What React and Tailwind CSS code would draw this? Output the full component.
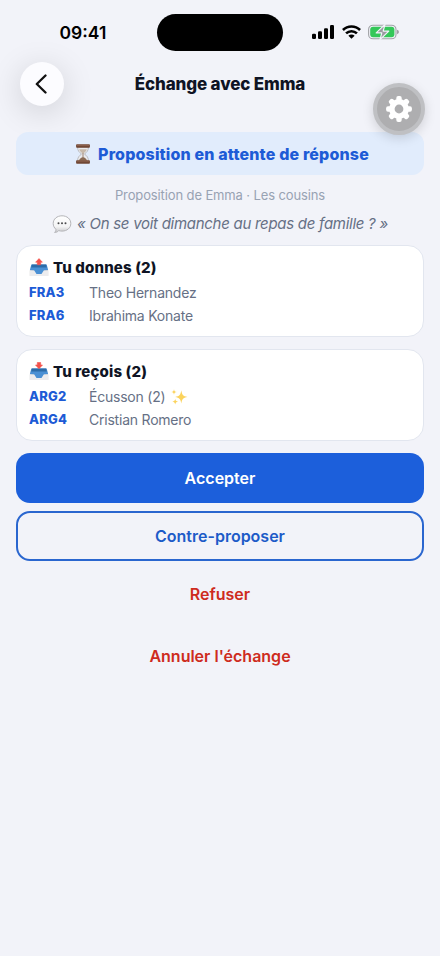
const trades = [
  {
    title: 'Tu donnes (2)',
    direction: 'up',
    items: [
      { code: 'FRA3', name: 'Theo Hernandez' },
      { code: 'FRA6', name: 'Ibrahima Konate' },
    ],
  },
  {
    title: 'Tu reçois (2)',
    direction: 'down',
    items: [
      { code: 'ARG2', name: 'Écusson (2)', shiny: true },
      { code: 'ARG4', name: 'Cristian Romero' },
    ],
  },
];

function SignalIcon() {
  return (
    <svg width="22" height="14" viewBox="0 0 22 14">
      <rect x="0" y="8.7" width="4" height="5.3" rx="1.2" />
      <rect x="6" y="6.2" width="4" height="7.8" rx="1.2" />
      <rect x="12" y="3.3" width="4" height="10.7" rx="1.2" />
      <rect x="18" y="0" width="4" height="14" rx="1.2" />
    </svg>
  );
}

function WifiIcon() {
  return (
    <svg width="19" height="14" viewBox="0 0 20 14" fill="none" stroke="#000" strokeWidth="2.7">
      <path d="M1 4.900a12.700 12.700 0 0 1 18 0" />
      <path d="M4.300 8.500a8 8 0 0 1 11.400 0" />
      <path d="M10 14 6.700 10.900a4.700 4.700 0 0 1 6.600 0Z" fill="#000" stroke="none" />
    </svg>
  );
}

function BatteryIcon() {
  return (
    <svg width="31" height="16" viewBox="0 0 31 16">
      <rect x="0.6" y="1.2" width="27.4" height="13.6" rx="4.4" fill="none" stroke="#a1a2a7" strokeWidth="1.1" />
      <path d="M29.2 5.800q1.600.6 1.600 2.200t-1.600 2.200z" fill="#8d8e93" />
      <rect x="2.2" y="2.8" width="24.2" height="10.4" rx="2.9" fill="#34c759" />
      <path d="M17 .4 8.200 8.900h5.600L12 15.600l8.800-8.500h-5.600z" fill="#9a9ba0" stroke="#f2f3f9" strokeWidth="1.2" strokeLinejoin="round" />
    </svg>
  );
}

function GearIcon() {
  return (
    <svg width="26" height="26" viewBox="0 0 26 26" fill="#fff">
      {[0, 45, 90, 135].map((angle) => (
        <rect key={angle} x="10.3" y="0.1" width="5.4" height="25.8" rx="1.9" transform={`rotate(${angle} 13 13)`} />
      ))}
      <circle cx="13" cy="13" r="9.9" />
      <circle cx="13" cy="13" r="4.4" fill="#aeaeb0" />
    </svg>
  );
}

function HourglassIcon() {
  return (
    <svg width="16" height="20" viewBox="0 0 16 20">
      <path d="M2.600 3h10.800c0 3.800-1.500 5.100-3.900 7 2.400 1.900 3.900 3.200 3.900 7H2.600c0-3.800 1.500-5.100 3.900-7C4.100 8.100 2.600 6.800 2.600 3Z" fill="#e9eaed" stroke="#a7a7aa" strokeWidth="0.7" />
      <path d="M4.200 5.200h7.600C11.200 7.400 9.700 8.400 8 9.800 6.300 8.400 4.800 7.400 4.200 5.200Z" fill="#c7b9aa" />
      <path d="M7.600 9h.8v4.300c2 .7 3.400 1.800 3.800 3.700H3.800c.4-1.900 1.800-3 3.800-3.700Z" fill="#8a6b55" />
      <rect x="1.1" y="0.3" width="13.8" height="3.5" rx="0.8" fill="#704735" />
      <path d="M2 1.200h12" stroke="#a57961" strokeWidth="0.7" />
      <rect x="1.1" y="16.2" width="13.8" height="3.5" rx="0.8" fill="#704735" />
      <path d="M2 17h12" stroke="#a57961" strokeWidth="0.7" />
    </svg>
  );
}

function BubbleIcon() {
  return (
    <svg width="20" height="19" viewBox="0 0 20 19">
      <defs>
        <linearGradient id="bubble" x1="0" y1="0" x2="0" y2="1">
          <stop offset="0" stopColor="#fff" />
          <stop offset="0.65" stopColor="#f4f4f5" />
          <stop offset="1" stopColor="#c7c7ca" />
        </linearGradient>
      </defs>
      <path
        d="M10 .8c5.100 0 8.800 3.300 8.800 7.700s-3.700 7.600-8.800 7.600c-1.200 0-2.300-.2-3.300-.5-1 1.200-2.500 1.900-4.100 1.800 1.100-.9 1.500-2 1.300-3.200C2.200 12.800 1.200 10.800 1.200 8.500 1.200 4.100 4.900.8 10 .8Z"
        fill="url(#bubble)"
        stroke="#b4b4b8"
        strokeWidth="1"
      />
      <circle cx="6.5" cy="8.3" r="1" fill="#4a4a4c" />
      <circle cx="10" cy="8.3" r="1" fill="#4a4a4c" />
      <circle cx="13.5" cy="8.3" r="1" fill="#4a4a4c" />
    </svg>
  );
}

function TrayIcon({ direction }) {
  return (
    <svg width="20" height="19" viewBox="0 0 20 19">
      <path d="M2.300 8h15.400l1.500 4.400v5.400H.8v-5.400Z" fill="#dcdde0" />
      <path d="M.6 13h18.800v5H.6Z" fill="#ececee" />
      <path d="M2.300 6.500h15.400l1.400 5.400-4.200.4-2.400 3.600h-5l-2.400-3.600-4.200-.4Z" fill="#4a90d4" />
      <path d="M3 6.500h14l.8 3.100H2.200Z" fill="#2c6ca8" />
      {direction === 'up' ? (
        <path d="M10 .6 13.400 4.200h-1.700v2.600H8.300V4.200H6.600Z" fill="#f4524b" stroke="#f4524b" strokeWidth="0.6" strokeLinejoin="round" />
      ) : (
        <path d="M8.300.5h3.400v2.500h1.800L10 6.800 6.500 3h1.800Z" fill="#f4524b" stroke="#f4524b" strokeWidth="0.6" strokeLinejoin="round" />
      )}
    </svg>
  );
}

function SparklesIcon() {
  return (
    <svg width="17" height="16" viewBox="0 0 17 16" fill="#fbd35c">
      <path d="M10.300 1.200c.7 4.600 1.700 5.900 6.200 6.700-4.500.8-5.500 2.100-6.200 6.700-.7-4.600-1.700-5.900-6.200-6.700 4.500-.8 5.500-2.100 6.200-6.700Z" />
      <path d="M3 .2c.3 1.900.9 2.500 2.800 2.800C3.900 3.300 3.300 3.900 3 5.800 2.700 3.900 2.100 3.300.2 3 2.100 2.700 2.700 2.100 3 .2Z" />
      <path d="M4.200 9.800c.3 2 .9 2.600 2.900 2.900-2 .3-2.600.9-2.900 2.900-.3-2-.9-2.600-2.900-2.900 2-.3 2.600-.9 2.900-2.900Z" />
    </svg>
  );
}

function TradeCard({ title, direction, items }) {
  return (
    <section className="flex h-[92px] shrink-0 flex-col gap-1.5 rounded-2xl border border-[#e2e6ef] bg-white px-3 pt-3">
      <h2 className="mb-px flex h-[19px] items-center gap-1 text-[15px] font-extrabold leading-[19px] tracking-[0.15px] text-[#0f1424]">
        <TrayIcon direction={direction} />
        {title}
      </h2>
      {items.map((item) => (
        <div key={item.code} className="flex h-[17px] items-center leading-[17px]">
          <span className="w-[60px] text-[13px] font-extrabold tracking-[0.2px] text-[#1d5bd6]">{item.code}</span>
          <span className="text-[14px] tracking-[-0.22px] text-[#667085]">{item.name}</span>
          {item.shiny && (
            <span className="ml-1.5">
              <SparklesIcon />
            </span>
          )}
        </div>
      ))}
    </section>
  );
}

export default function App() {
  return (
    <div className="relative flex h-[956px] w-[440px] flex-col overflow-hidden bg-[#f2f3f9] font-['Inter',sans-serif]">
      <div className="flex h-[62px] shrink-0 items-start">
        <div className="flex h-[66px] w-[157px] items-center pl-[59.5px] text-[17.5px] font-semibold text-black">09:41</div>
        <div className="mt-3.5 h-[37px] w-[126px] rounded-full bg-black" />
        <div className="ml-[29px] flex h-[64px] items-center gap-[7.5px]">
          <SignalIcon />
          <WifiIcon />
          <BatteryIcon />
        </div>
      </div>

      <header className="flex h-[54px] shrink-0 items-start px-5">
        <button className="flex size-11 items-center justify-center rounded-full bg-[#fcfcff] shadow-[0_6px_32px_rgba(0,0,0,0.15)]">
          <svg width="12" height="20" viewBox="0 0 12 20" fill="none" stroke="#111" strokeWidth="2.3" strokeLinecap="round" strokeLinejoin="round" className="-ml-[3px]">
            <path d="M10.500 1.500 1.800 10l8.700 8.500" />
          </svg>
        </button>
        <h1 className="mr-11 flex-1 text-center text-[17px] font-extrabold leading-[45px] tracking-[-0.14px] text-[#0f1424]">Échange avec Emma</h1>
      </header>

      <main className="flex flex-col px-4 pt-4">
        <div className="flex h-[43px] items-center justify-center gap-[7px] rounded-xl bg-[#e1ecfc] pl-1 text-[16px] font-extrabold tracking-[0.15px] text-[#1d5bd6]">
          <HourglassIcon />
          <span>Proposition en attente de réponse</span>
        </div>
        <p className="mt-3 h-4 text-center text-[13px] leading-[17px] tracking-[-0.12px] text-[#98a2b3]">Proposition de Emma · Les cousins</p>
        <p className="mt-3 flex h-[18px] items-center justify-center gap-[5px] text-[15px] italic leading-[18px] tracking-[-0.28px] text-[#667085]">
          <BubbleIcon />
          <span>« On se voit dimanche au repas de famille ? »</span>
        </p>

        <div className="mt-3 flex flex-col gap-3">
          {trades.map((trade) => (
            <TradeCard key={trade.title} {...trade} />
          ))}
        </div>

        <div className="mt-3 flex flex-col gap-2 text-[16px] font-semibold">
          <button className="h-[50px] rounded-[14px] bg-[#1c5fdb] text-white">Accepter</button>
          <button className="h-[50px] rounded-[14px] border-2 border-[#2a66cf] text-[#1d5bc8]">Contre-proposer</button>
          <button className="h-[50px] text-[#ce2b20]">Refuser</button>
          <button className="mt-1 h-[50px] text-[#ce2b20]">Annuler l'échange</button>
        </div>
      </main>

      {/* floating settings button */}
      <button className="absolute left-[373px] top-[83px] flex size-[52px] items-center justify-center rounded-full border-4 border-[#bfc0c3] bg-[#aeaeb0] shadow-[0_3px_12px_rgba(0,0,0,0.15)]">
        <GearIcon />
      </button>
    </div>
  );
}
